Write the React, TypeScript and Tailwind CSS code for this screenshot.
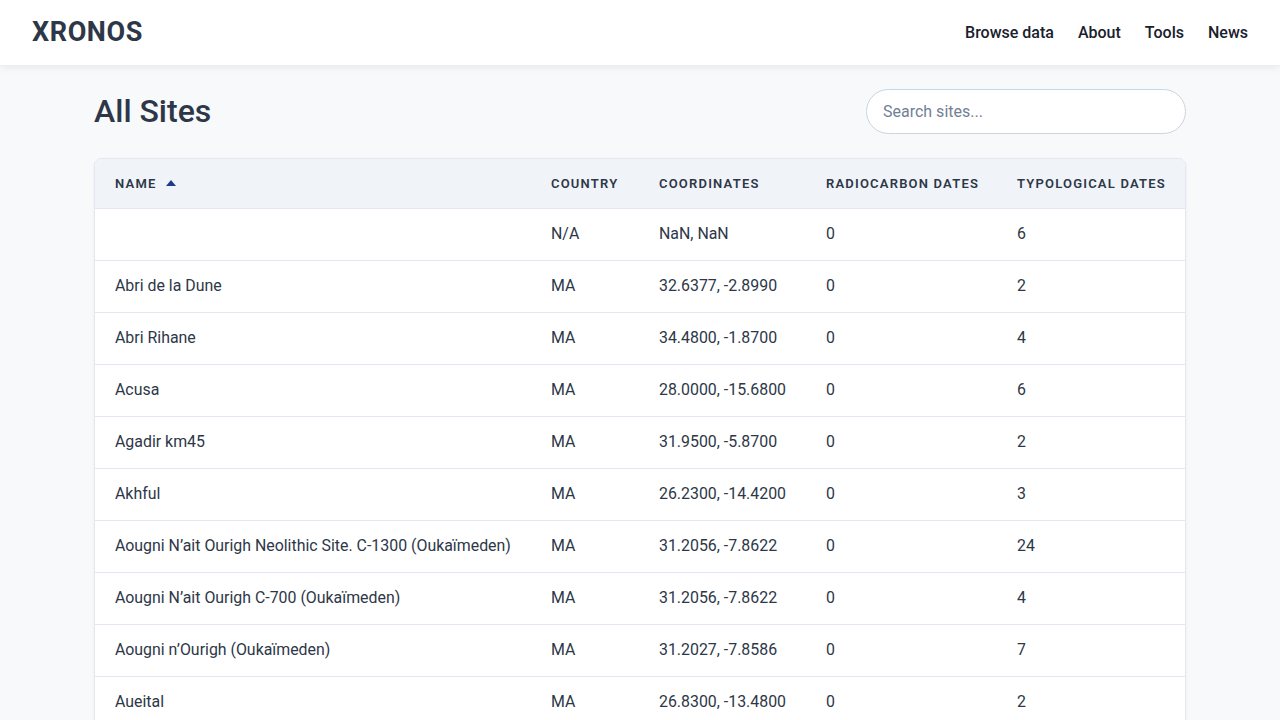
import React, { useState } from 'react';

interface Site {
  name: string;
  country: string;
  coords: string;
  radiocarbon: number;
  typological: number;
}

const sites: Site[] = [
  { name: '', country: 'N/A', coords: 'NaN, NaN', radiocarbon: 0, typological: 6 },
  { name: 'Abri de la Dune', country: 'MA', coords: '32.6377, -2.8990', radiocarbon: 0, typological: 2 },
  { name: 'Abri Rihane', country: 'MA', coords: '34.4800, -1.8700', radiocarbon: 0, typological: 4 },
  { name: 'Acusa', country: 'MA', coords: '28.0000, -15.6800', radiocarbon: 0, typological: 6 },
  { name: 'Agadir km45', country: 'MA', coords: '31.9500, -5.8700', radiocarbon: 0, typological: 2 },
  { name: 'Akhful', country: 'MA', coords: '26.2300, -14.4200', radiocarbon: 0, typological: 3 },
  { name: 'Aougni N\u2019ait Ourigh Neolithic Site. C-1300 (Oukaïmeden)', country: 'MA', coords: '31.2056, -7.8622', radiocarbon: 0, typological: 24 },
  { name: 'Aougni N\u2019ait Ourigh C-700 (Oukaïmeden)', country: 'MA', coords: '31.2056, -7.8622', radiocarbon: 0, typological: 4 },
  { name: 'Aougni n\u2019Ourigh (Oukaïmeden)', country: 'MA', coords: '31.2027, -7.8586', radiocarbon: 0, typological: 7 },
  { name: 'Aueital', country: 'MA', coords: '26.8300, -13.4800', radiocarbon: 0, typological: 2 },
];

export default function App() {
  const [query, setQuery] = useState('');

  const filtered = sites.filter(s => s.name.toLowerCase().includes(query.toLowerCase()));

  return (
    <div className="min-h-screen bg-[#f7f9fb] font-['Roboto',sans-serif] text-[#2d3748]">
      {/* Header */}
      <header className="h-[65px] bg-white shadow-[0_2px_8px_rgba(0,0,0,0.08)] flex items-center justify-between px-8 relative z-10">
        <div className="text-[27px] font-bold tracking-[0.6px] text-[#2d3748]">XRONOS</div>
        <nav className="flex items-center gap-6 text-base font-medium text-[#1a202c]">
          <a href="#">Browse data</a>
          <a href="#">About</a>
          <a href="#">Tools</a>
          <a href="#">News</a>
        </nav>
      </header>

      <main className="w-[1092px] mx-auto pt-6">
        <div className="flex items-center justify-between h-[44px]">
          <h1 className="text-[32px] font-medium text-[#2d3748]">All Sites</h1>
          <input
            value={query}
            onChange={e => setQuery(e.target.value)}
            placeholder="Search sites..."
            className="w-[320px] h-[45px] rounded-full border border-[#cbd5e0] bg-white px-4 text-base placeholder-[#718096] outline-none"
          />
        </div>

        <div className="mt-[25px] bg-white rounded-lg border border-[#e2e8f0] shadow-[0_1px_3px_rgba(0,0,0,0.06)] overflow-hidden">
          <table className="w-full table-fixed border-collapse text-[15.9px]">
            <colgroup>
              <col className="w-[436px]" />
              <col className="w-[108px]" />
              <col className="w-[167px]" />
              <col className="w-[191px]" />
              <col />
            </colgroup>
            <thead>
              <tr className="bg-[#f0f4f8] h-[49px] text-left text-[13px] font-semibold uppercase tracking-[1.2px] text-[#2d3748]">
                <th className="px-5 font-semibold whitespace-nowrap">
                  <span className="inline-flex items-center gap-[9px]">
                    NAME
                    <svg width="10" height="6" viewBox="0 0 10 6"><path d="M5 0 L10 6 L0 6 Z" fill="#1e3a8a" /></svg>
                  </span>
                </th>
                <th className="px-5 font-semibold whitespace-nowrap">Country</th>
                <th className="px-5 font-semibold whitespace-nowrap">Coordinates</th>
                <th className="px-5 font-semibold whitespace-nowrap">Radiocarbon Dates</th>
                <th className="px-5 font-semibold whitespace-nowrap">Typological Dates</th>
              </tr>
            </thead>
            <tbody>
              {filtered.map((s, i) => (
                <tr key={i} className="h-[52px] border-t border-[#e2e8f0] text-[#2d3748]">
                  <td className="px-5 whitespace-nowrap">{s.name}</td>
                  <td className="px-5 whitespace-nowrap">{s.country}</td>
                  <td className="px-5 whitespace-nowrap">{s.coords}</td>
                  <td className="px-5">{s.radiocarbon}</td>
                  <td className="px-5">{s.typological}</td>
                </tr>
              ))}
            </tbody>
          </table>
        </div>
      </main>
    </div>
  );
}
